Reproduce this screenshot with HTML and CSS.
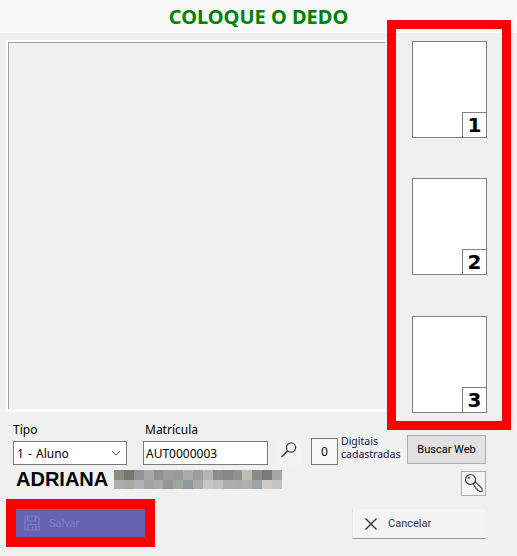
FILE: index.html
```html
<!doctype html>
<html lang="pt">
<head>
    <meta charset="UTF-8">
    <title>Cadastro de digitais</title>
    <link rel="stylesheet" href="styles.css">
</head>
<body>
<div class="title">COLOQUE O DEDO</div>

<div class="capture">
    <div class="preview"><div class="preview-inner"></div></div>
    <div class="red-frame thumbs">
        <div class="thumb"><span class="thumb-num">1</span></div>
        <div class="thumb"><span class="thumb-num">2</span></div>
        <div class="thumb thumb-last"><span class="thumb-num">3</span></div>
    </div>
</div>

<div class="form-row">
    <div class="field field-tipo">
        <label class="label">Tipo</label>
        <div class="select">
            <span>1 - Aluno</span>
            <svg class="chevron" width="10" height="6" viewBox="0 0 10 6"><path d="M1 1l4 4 4-4" fill="none" stroke="#555" stroke-width="1"/></svg>
        </div>
    </div>
    <div class="field field-matricula">
        <label class="label">Matrícula</label>
        <input class="input" type="text" value="AUT0000003">
    </div>
    <div class="search-btn">
        <svg width="26" height="25" viewBox="0 0 26 25"><circle cx="15" cy="7.5" r="4.6" fill="none" stroke="#444" stroke-width="1.3"/><path d="M11.6 10.8L5.6 17" fill="none" stroke="#444" stroke-width="1.7"/></svg>
    </div>
    <div class="count">0</div>
    <div class="count-text">Digitais<br>cadastradas</div>
    <button class="web-btn" type="button">Buscar Web</button>
</div>

<div class="name-row">
    <span class="name">ADRIANA</span>
    <svg class="blur-name" width="168" height="19" viewBox="0 0 170 20" preserveAspectRatio="none" shape-rendering="crispEdges">
        <g>
            <rect x="0" width="10" height="10" fill="#8b8b85"/><rect x="10" width="10" height="10" fill="#77776f"/><rect x="20" width="10" height="10" fill="#8d959b"/><rect x="30" width="10" height="10" fill="#a9a9a9"/><rect x="40" width="10" height="10" fill="#94918c"/><rect x="50" width="10" height="10" fill="#9d9c9b"/><rect x="60" width="10" height="10" fill="#9a9b96"/><rect x="70" width="10" height="10" fill="#a6adb1"/><rect x="80" width="10" height="10" fill="#a09e99"/><rect x="90" width="10" height="10" fill="#b3b6b9"/><rect x="100" width="10" height="10" fill="#8e8d88"/><rect x="110" width="10" height="10" fill="#868686"/><rect x="120" width="10" height="10" fill="#8c9194"/><rect x="130" width="10" height="10" fill="#c3bbb4"/><rect x="140" width="10" height="10" fill="#868b89"/><rect x="150" width="10" height="10" fill="#7b7a72"/><rect x="160" width="10" height="10" fill="#a0a8ae"/>
        </g>
        <g transform="translate(0 10)">
            <rect x="0" width="10" height="10" fill="#aeaeaa"/><rect x="10" width="10" height="10" fill="#a9a9a4"/><rect x="20" width="10" height="10" fill="#b0b3ba"/><rect x="30" width="10" height="10" fill="#a2a2a2"/><rect x="40" width="10" height="10" fill="#aba9a0"/><rect x="50" width="10" height="10" fill="#8f979b"/><rect x="60" width="10" height="10" fill="#a4a49f"/><rect x="70" width="10" height="10" fill="#8f989b"/><rect x="80" width="10" height="10" fill="#abaca6"/><rect x="90" width="10" height="10" fill="#c5c7ca"/><rect x="100" width="10" height="10" fill="#bfc1bf"/><rect x="110" width="10" height="10" fill="#aeaeac"/><rect x="120" width="10" height="10" fill="#acacac"/><rect x="130" width="10" height="10" fill="#b2aeaa"/><rect x="140" width="10" height="10" fill="#9da5a6"/><rect x="150" width="10" height="10" fill="#cdcac4"/><rect x="160" width="10" height="10" fill="#bfc3ca"/>
        </g>
    </svg>
    <div class="key-btn">
        <svg width="23" height="23" viewBox="0 0 23 23"><path d="M11.5 11.5l1.6-1.6 7 6.6v3h-2.4l-1-1.2-1.2.1-.3-1.5-1.4-.1-.1-1.4-1.6-1.7z" fill="#fff" stroke="#444" stroke-width="1.1" stroke-linejoin="round"/><circle cx="8.5" cy="7.5" r="5" fill="#f0f0f0" stroke="#444" stroke-width="1.2"/><circle cx="7" cy="5.8" r="1" fill="#444"/></svg>
    </div>
</div>

<div class="footer">
    <div class="save-frame">
        <button class="save-btn" type="button">
            <svg width="16" height="16" viewBox="0 0 16 16"><path d="M1 1h11.5L15 3.5V15H1z" fill="none" stroke="#7c7cd0" stroke-width="1.2"/><path d="M3.5 1v5h8V1M4 15v-5.5h8V15M8.5 11v3" fill="none" stroke="#7c7cd0" stroke-width="1.2"/></svg>
            <span>Salvar</span>
        </button>
    </div>
    <button class="cancel-btn" type="button">
        <svg width="14" height="14" viewBox="0 0 14 14"><path d="M1.5 1.5l11 11M12.5 1.5l-11 11" fill="none" stroke="#333" stroke-width="1.4"/></svg>
        <span>Cancelar</span>
    </button>
</div>
</body>
</html>
```

FILE: styles.css
```css
html, body {
    margin: 0;
    height: 100%;
    overflow: hidden;
}
body {
    width: 517px;
    height: 556px;
    background-color: #f0f0f0;
    font-family: "Noto Sans", "Open Sans", sans-serif;
    font-size: 12px;
    color: #000;
}
button {
    font-family: Roboto, sans-serif;
    padding: 0;
}

.title {
    height: 33px;
    line-height: 33px;
    background-color: #f8f8f8;
    color: #008000;
    font-size: 20px;
    font-weight: bold;
    text-align: center;
}

/* the red frame hangs over the title bar and the form row */
.capture {
    display: flex;
    align-items: flex-start;
    margin-top: -13px;
    margin-bottom: -18px;
    padding-left: 6px;
    height: 410px;
}
.preview {
    box-sizing: border-box;
    width: 379px;
    height: 372px;
    margin-top: 20px;
    border-top: 2px solid #fff;
    border-left: 2px solid #fff;
    border-bottom: 3px solid #fff;
}
.preview-inner {
    box-sizing: border-box;
    height: 100%;
    border-top: 1px solid #a0a0a0;
    border-left: 1px solid #a0a0a0;
}

.red-frame {
    box-sizing: border-box;
    border: 9px solid #f00;
}
.thumbs {
    display: flex;
    flex-direction: column;
    gap: 40px;
    width: 124px;
    height: 410px;
    margin-left: 2px;
    padding: 12px 0 0 16px;
}
.thumb {
    box-sizing: border-box;
    display: flex;
    justify-content: flex-end;
    align-items: flex-end;
    width: 75px;
    height: 97px;
    background-color: #fff;
    border: 1px solid #808080;
}
.thumb-last {
    margin-top: 1px;
}
.thumb-num {
    box-sizing: border-box;
    width: 24px;
    height: 25px;
    line-height: 25px;
    border-top: 1px solid #808080;
    border-left: 1px solid #808080;
    font-family: "DejaVu Sans", sans-serif;
    font-size: 20px;
    font-weight: bold;
    text-align: center;
}

.form-row {
    display: flex;
    align-items: flex-start;
    height: 54px;
    padding-left: 13px;
}
.field {
    display: flex;
    flex-direction: column;
    padding-top: 9px;
}
.field-tipo {
    width: 114px;
}
.field-matricula {
    width: 125px;
    margin-left: 16px;
}
.label {
    height: 20px;
    line-height: 18px;
}
.field-matricula .label {
    padding-left: 2px;
}
.select, .input {
    box-sizing: border-box;
    height: 24px;
    margin: 0;
    background-color: #fff;
    border: 1px solid #7a7a7a;
    font-family: inherit;
    font-size: 12px;
    color: #000;
}
.select {
    display: flex;
    align-items: center;
    justify-content: space-between;
    padding: 0 5px 0 3px;
    word-spacing: 1px;
}
.input {
    width: 125px;
    padding: 0 2px;
}
.search-btn {
    width: 26px;
    height: 25px;
    margin: 28px 0 0 8px;
    background-color: #f2f2f2;
}
.count {
    box-sizing: border-box;
    width: 27px;
    height: 27px;
    line-height: 25px;
    margin: 26px 0 0 9px;
    border: 1px solid #7a7a7a;
    background-color: #f8f8f8;
    text-align: center;
}
.count-text {
    margin: 23px 0 0 3px;
    width: 66px;
    font-size: 10.5px;
    line-height: 13px;
    color: #14144a;
}
.web-btn {
    box-sizing: border-box;
    width: 79px;
    height: 29px;
    margin: 23px 0 0 0;
    background-color: #e1e1e1;
    border: 1px solid #adadad;
    font-size: 11px;
    color: #000;
}

.name-row {
    display: flex;
    align-items: flex-start;
    height: 33px;
    padding: 0 31px 0 16px;
}
.name {
    width: 98px;
    height: 26px;
    line-height: 26px;
    font-family: "Liberation Sans", sans-serif;
    font-size: 20px;
    font-weight: bold;
}
.blur-name {
    margin-top: 4px;
}
.key-btn {
    box-sizing: border-box;
    width: 25px;
    height: 25px;
    margin: 5px 0 0 auto;
    border: 1px solid #adadad;
    background-color: #f4f4f4;
}

.footer {
    display: flex;
    align-items: flex-start;
    justify-content: space-between;
    padding: 0 31px 0 6px;
}
.save-frame {
    box-sizing: border-box;
    width: 149px;
    height: 48px;
    border: 10px solid #f00;
}
.save-btn {
    display: flex;
    align-items: center;
    gap: 9px;
    width: 100%;
    height: 100%;
    padding-left: 8px;
    background-color: #6464b0;
    border: 0;
    font-size: 11px;
    color: #7f7fd2;
}
.cancel-btn {
    box-sizing: border-box;
    display: flex;
    align-items: center;
    gap: 10px;
    width: 134px;
    height: 30px;
    margin-top: 10px;
    padding-left: 11px;
    background-color: #f4f4f4;
    border: 0;
    border-bottom: 1px solid #9a9a9a;
    border-left: 1px solid #e4e4e4;
    font-size: 11px;
    color: #333;
}
```
